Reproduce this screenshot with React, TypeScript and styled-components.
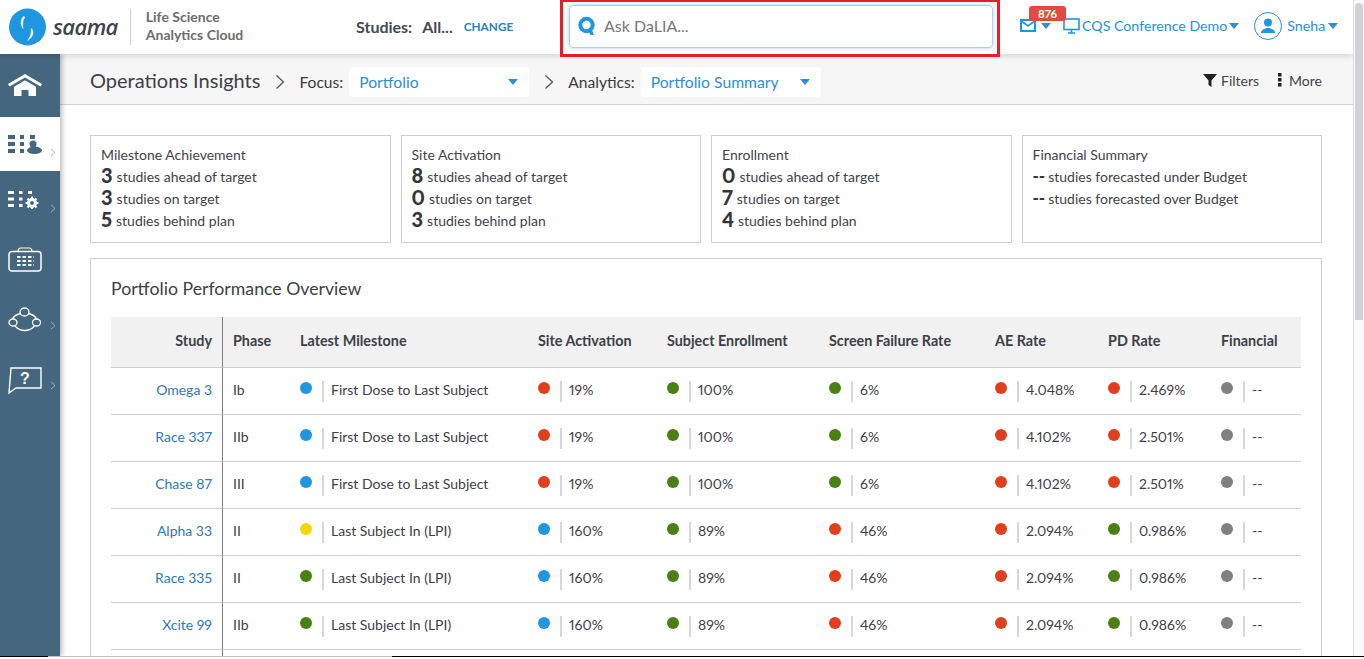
import React from "react";
import styled, { createGlobalStyle } from "styled-components";

const Global = createGlobalStyle`
  html, body { margin: 0; padding: 0; height: 100%; overflow: hidden; }
  body { font-family: Lato, "Open Sans", "Liberation Sans", sans-serif; color: #3a3f45; background: #fff; font-variant-numeric: proportional-nums; }
  * { box-sizing: border-box; }
`;

const Shell = styled.div`
  width: 1364px; height: 659px; overflow: hidden; display: grid;
  grid-template-columns: 1353px 11px; grid-template-rows: 656px 1px 2px;
`;
const Page = styled.div`display: flex; flex-direction: column; height: 656px; overflow: hidden;`;
const ScrollTrack = styled.div`background: #fafafa; border-left: 1px solid #dcdce0; padding: 3px 1px 0 1px;`;
const ScrollThumb = styled.div`height: 317px; background: #d2d3d7; border-radius: 5px 5px 0 0;`;
const BottomEdge = styled.div`
  grid-column: 1 / 3;
  background: linear-gradient(to right, #000 48px, #bdbdbd 48px, #bdbdbd 392px, #000 392px);
`;
const Header = styled.header`
  height: 54px; flex: none; display: flex; align-items: center; background: #fff; position: relative; z-index: 3;
  box-shadow: 0 2px 6px rgba(0,0,0,.14);
`;
const LogoWrap = styled.div`display: flex; align-items: center; padding-left: 9px; width: 356px; flex: none;`;
const Brand = styled.span`font-size: 22px; font-style: italic; font-weight: 600; color: #3d444b; margin: -3px 0 0 7px; letter-spacing: -0.6px; font-family: "Open Sans", sans-serif;`;
const Divider = styled.span`width: 1px; height: 36px; background: #cfcfcf; margin: 0 15px 0 12px;`;
const Tagline = styled.div`font-size: 14px; line-height: 18px; font-weight: 700; color: #6d6d6d; margin-top: -2px;`;
const Studies = styled.div`display: flex; align-items: center; width: 204px; flex: none; font-size: 16px; font-weight: 700; color: #444a50; margin-top: -2px;`;
const StudyVal = styled.span`margin-left: 10px;`;
const Change = styled.a`margin-left: 11px; font-size: 11.8px; font-weight: 700; color: #2f80b9;`;
const SearchFrame = styled.div`
  width: 440px; height: 57px; flex: none; align-self: flex-start; border-style: solid; border-color: #ea1c24; border-width: 2px 3px 3px; padding: 3px 4px 0 6px; background: #fff; position: relative;
`;
const SearchBox = styled.div`
  height: 43px; display: flex; align-items: center; gap: 9px; padding: 0 0 2px 8px; border: 1px solid #a5d3f1; border-radius: 4px;
  box-shadow: 0 0 4px rgba(90,170,230,.5); color: #777; font-size: 16px;
`;
const TopRight = styled.div`display: flex; align-items: center; margin: -3px 0 0 20px; color: #2b8fd6; font-size: 14.2px; flex: none;`;
const MailWrap = styled.span`position: relative; display: flex; align-items: center; gap: 5px; height: 20px; width: 43px;`;
const Badge = styled.span`
  position: absolute; left: 9px; top: -10px; width: 37px; height: 15px; border-radius: 3px; background: #e24c3f; color: #fff;
  font-size: 11.5px; font-weight: 700; line-height: 15px; text-align: center;
`;
const Caret = styled.span<{ $gap?: number }>`
  display: inline-block; width: 0; height: 0; margin-left: ${p => p.$gap ?? 0}px;
  border-left: 5px solid transparent; border-right: 5px solid transparent; border-top: 6px solid #2b8fd6;
`;
const MonitorIcon = styled.svg`margin-right: 2px; flex: none;`;
const Avatar = styled.span`
  width: 28px; height: 28px; border-radius: 50%; border: 1px solid #2b8fd6; display: flex; align-items: center; justify-content: center; margin: 0 5px 0 15px;
`;
const Body = styled.div`flex: 1; display: flex; min-height: 0;`;
const Rail = styled.nav`
  width: 60px; flex: none; background: #44667f; display: flex; flex-direction: column; align-items: stretch; padding-top: 4px; position: relative; z-index: 2;
  box-shadow: 2px 0 5px rgba(0,0,0,.28);
`;
const RailItem = styled.div<{ $active?: boolean }>`
  height: 54px; margin-bottom: 5px; padding: 0 0 0 8px; display: flex; align-items: center; gap: 8px; flex: none;
  background: ${p => (p.$active ? "#fff" : "transparent")};
`;
const RailIcon = styled.svg<{ $dy?: number }>`width: 34px; flex: none; margin-top: ${p => p.$dy ?? 0}px;`;
const Chevron = styled.svg<{ $dy: number }>`width: 6px; height: 9px; margin-top: ${p => p.$dy}px;`;
const Main = styled.main`flex: 1; min-width: 0; display: flex; flex-direction: column; background: #fff;`;
const Crumb = styled.div`
  height: 51px; flex: none; display: flex; align-items: center; padding: 6px 31px 0 30px; background: #f6f6f6; border-bottom: 1px solid #d3d3d3; font-size: 15.6px; color: #3a3a3a;
`;
const CrumbTitle = styled.span`font-size: 20px; color: #3c4045; margin-top: -4px;`;
const Sep = styled.svg`width: 10px; height: 16px; margin: 0 14px 0 15px; flex: none;`;
const Select = styled.div`
  width: 180px; height: 30px; background: #fff; border-radius: 4px; margin-left: 6px; padding: 0 11px 0 10px; display: flex; align-items: center; justify-content: space-between;
  color: #2b8fd6; font-size: 15.7px;
`;
const Actions = styled.div`margin: -4px 0 0 auto; display: flex; align-items: center; gap: 19px; font-size: 14px; color: #444;`;
const Action = styled.span<{ $gap: number }>`display: flex; align-items: center; gap: ${p => p.$gap}px;`;
const Content = styled.div`flex: 1; padding: 30px 31px 0 30px; min-height: 0; overflow: hidden;`;
const Cards = styled.div`display: grid; grid-template-columns: repeat(4, 1fr); column-gap: 10px;`;
const Card = styled.section`
  height: 108px; border: 1px solid #cfcfcf; padding: 8px 10px; font-size: 14px; line-height: 22px; color: #3f4347;
`;
const Num = styled.b`font-size: 20px; line-height: 0; font-weight: 900; color: #33373b; margin-right: 4px; vertical-align: -1px;`;
const Dash = styled.b`font-size: 17px; line-height: 0; font-weight: 900; color: #33373b; margin-right: 3px;`;
const Line = styled.div`height: 22px; white-space: nowrap;`;
const Panel = styled.section`
  margin-top: 15px; border: 1px solid #cfcfcf; border-bottom: 0; padding: 0 20px; height: 400px;
`;
const PanelTitle = styled.h2`margin: 0; height: 58px; padding-top: 18px; font-size: 17.7px; line-height: 24px; font-weight: 400; color: #3c4045;`;
const Table = styled.div`display: grid; grid-template-columns: 112px 77px 238px 129px 162px 166px 113px 113px 80px;`;
const Row = styled.div<{ $head?: boolean }>`
  display: contents;
  & > div {
    height: ${p => (p.$head ? "51px" : "47px")}; border-bottom: 1px solid #cdcdcd;
    background: ${p => (p.$head ? "#f1f1f1" : "#fff")}; font-weight: ${p => (p.$head ? 700 : 400)};
    font-size: ${p => (p.$head ? "14.35px" : "14px")};
  }
`;
const Cell = styled.div<{ $study?: boolean }>`
  display: flex; align-items: center; color: #3c4045; white-space: nowrap; padding-bottom: 4px;
  ${p => (p.$study ? "justify-content: flex-end; padding-right: 10px; border-right: 1px solid #808080;" : "")}
`;
const PhaseCell = styled(Cell)`padding-left: 10px;`;
const Link = styled.a`color: #2f78b7;`;
const Dot = styled.span<{ $c: string }>`width: 12px; height: 12px; border-radius: 50%; background: ${p => p.$c}; margin-top: -3px; flex: none;`;
const Bar = styled.span`width: 2px; height: 21px; background: #d6d6dc; margin: 4px 7px 0 10px; flex: none;`;

const C = { b: "#1f96e0", r: "#e03e1c", g: "#4a7f14", y: "#f8d40d", k: "#808080" };

type R = [string, string, string, string, string, string, string, string, string, string, string, string];
const rows: R[] = [
  ["Omega 3", "Ib", C.b, "First Dose to Last Subject", C.r, "19%", C.g, "100%", C.g, "6%", C.r, "4.048%"],
  ["Race 337", "IIb", C.b, "First Dose to Last Subject", C.r, "19%", C.g, "100%", C.g, "6%", C.r, "4.102%"],
  ["Chase 87", "III", C.b, "First Dose to Last Subject", C.r, "19%", C.g, "100%", C.g, "6%", C.r, "4.102%"],
  ["Alpha 33", "II", C.y, "Last Subject In (LPI)", C.b, "160%", C.g, "89%", C.r, "46%", C.r, "2.094%"],
  ["Race 335", "II", C.g, "Last Subject In (LPI)", C.b, "160%", C.g, "89%", C.r, "46%", C.r, "2.094%"],
  ["Xcite 99", "IIb", C.g, "Last Subject In (LPI)", C.b, "160%", C.g, "89%", C.r, "46%", C.r, "2.094%"],
];
const pd = ["2.469%", "2.501%", "2.501%", "0.986%", "0.986%", "0.986%"];

const cards = [
  { t: "Milestone Achievement", l: [["3", "studies ahead of target"], ["3", "studies on target"], ["5", "studies behind plan"]] },
  { t: "Site Activation", l: [["8", "studies ahead of target"], ["0", "studies on target"], ["3", "studies behind plan"]] },
  { t: "Enrollment", l: [["0", "studies ahead of target"], ["7", "studies on target"], ["4", "studies behind plan"]] },
  { t: "Financial Summary", l: [["--", "studies forecasted under Budget"], ["--", "studies forecasted over Budget"]] },
];

const Chev = ({ dy }: { dy: number }) => (
  <Chevron $dy={dy} viewBox="0 0 6 9"><path d="M1 .8 5 4.5 1 8.2" fill="none" stroke="#9fb2c1" strokeWidth="1" /></Chevron>
);
const SepIcon = () => <Sep viewBox="0 0 10 16"><path d="M1.500 1.500 8.500 8 1.500 14.500" fill="none" stroke="#555" strokeWidth="1.300" /></Sep>;

const App = () => (
  <Shell>
    <Global />
    <Page>
      <Header>
        <LogoWrap>
          <svg width="37" height="38" viewBox="0 0 37 38">
            <circle cx="18.500" cy="19" r="18.500" fill="#1f96e0" />
            <path d="M14.500 8.500c-2.500 3-3.500 7-.5 12 -.8-4-.5-8 1.800-11.500z" fill="#fff" stroke="#fff" strokeWidth=".6" />
            <path d="M22.500 20.500c2.500 3.500 2 8-3.800 12 2.700-3.500 4-7.500 3.800-12z" fill="#fff" stroke="#fff" strokeWidth=".6" />
          </svg>
          <Brand>saama</Brand>
          <Divider />
          <Tagline>Life Science<br />Analytics Cloud</Tagline>
        </LogoWrap>
        <Studies>Studies:<StudyVal>All...</StudyVal><Change>CHANGE</Change></Studies>
        <SearchFrame>
          <SearchBox>
            <svg width="17" height="20" viewBox="0 0 17 20"><circle cx="8.500" cy="9" r="6.200" fill="none" stroke="#1f96e0" strokeWidth="4" /><path d="M9.500 13l3 6h3.500l-3-7z" fill="#1f96e0" /></svg>
            Ask DaLIA...
          </SearchBox>
        </SearchFrame>
        <TopRight>
          <MailWrap>
            <Badge>876</Badge>
            <svg width="16" height="13" viewBox="0 0 16 13"><rect x="1" y="1" width="14" height="11" fill="none" stroke="#1f96e0" strokeWidth="2" /><path d="M2 2.500 8 7l6-4.500" fill="none" stroke="#1f96e0" strokeWidth="1.600" /></svg>
            <Caret />
          </MailWrap>
          <MonitorIcon width="17" height="16" viewBox="0 0 17 16"><rect x="1" y="1" width="15" height="10.500" fill="none" stroke="#1f96e0" strokeWidth="1.600" /><path d="M5 15h7M8.500 12v3" stroke="#1f96e0" strokeWidth="1.600" /></MonitorIcon>
          CQS Conference Demo<Caret $gap={2} />
          <Avatar>
            <svg width="16" height="18" viewBox="0 0 16 18"><circle cx="8" cy="5.500" r="4" fill="#1f96e0" /><path d="M1 16c0-3.500 4-4 5.500-5h3C11 12 15 12.500 15 16z" fill="#1f96e0" /></svg>
          </Avatar>
          Sneha<Caret $gap={3} />
        </TopRight>
      </Header>
      <Body>
        <Rail>
          <RailItem>
            <RailIcon height="23" viewBox="0 0 34 23" fill="#fff"><path d="M17 0 0 10l1.500 2.500L17 3.500 32.500 12.500 34 10z" /><path d="M6 12.800 17 6.200l11 6.600V22h-7.500v-6h-7v6H6z" /></RailIcon>
          </RailItem>
          <RailItem $active>
            <RailIcon height="19" viewBox="0 0 34 19" fill="#44667f">
              <rect width="7" height="4" /><rect y="7" width="7" height="4" /><rect y="14" width="7" height="4" />
              <rect x="12" width="4" height="4" /><rect x="12" y="7" width="4" height="4" /><rect x="12" y="14" width="4" height="4" />
              <rect x="22" width="5" height="4" />
              <circle cx="25" cy="9" r="3.500" />
              <ellipse cx="26.500" cy="15.300" rx="7.500" ry="3.700" />
            </RailIcon>
            <Chev dy={16} />
          </RailItem>
          <RailItem>
            <RailIcon height="18" $dy={-6} viewBox="0 0 34 18" fill="#fff">
              <rect width="6" height="3" /><rect y="6.500" width="6" height="3" /><rect y="13" width="6" height="3" />
              <rect x="11" width="3.500" height="3" /><rect x="11" y="6.500" width="3.500" height="3" /><rect x="11" y="13" width="3.500" height="3" />
              <rect x="20" width="4" height="3" />
              <circle cx="24" cy="12" r="3.500" fill="none" stroke="#fff" strokeWidth="3" />
              <path d="M24 5.500v3M24 15.500v2.500M17.500 12h3M27.500 12h3M19.500 7.500l2 2M26.500 14.500l2 2M19.500 16.500l2-2M26.500 9.500l2-2" stroke="#fff" strokeWidth="2" />
            </RailIcon>
            <Chev dy={10} />
          </RailItem>
          <RailItem>
            <RailIcon height="25" $dy={-6} viewBox="0 0 34 25"><rect x="1" y="4.500" width="32" height="19.500" rx="3" fill="none" stroke="#fff" strokeWidth="1.500" /><path d="M10 4.500C10 2 11 1 13 1h8c2 0 3 1 3 3.500" fill="none" stroke="#fff" strokeWidth="1.200" /><path d="M9 10h17M9 14h17M9 18h17" stroke="#fff" strokeWidth="1.800" strokeDasharray="3.500 2" /></RailIcon>
          </RailItem>
          <RailItem>
            <RailIcon height="25" $dy={-4} viewBox="0 0 34 25" fill="none" stroke="#fff" strokeWidth="1.300"><ellipse cx="16.500" cy="5" rx="4.500" ry="4" /><ellipse cx="5" cy="15.500" rx="4" ry="3.500" /><ellipse cx="28.500" cy="15.500" rx="4" ry="3.500" /><path d="M12.500 6.500C8.500 7.500 5.500 9.500 4.500 12M20.500 6.500c4 1 7 3 8 5.500M7 19c5.500 6 14 6 19.500 0" /></RailIcon>
            <Chev dy={8} />
          </RailItem>
          <RailItem>
            <RailIcon height="27" viewBox="0 0 34 27" fill="none" stroke="#fff" strokeWidth="1.400"><path d="M3 1h30v20H8l-7 5z" /><text x="12" y="16.500" fill="#fff" stroke="none" fontSize="16" fontWeight="700" fontFamily="Liberation Sans">?</text></RailIcon>
            <Chev dy={10} />
          </RailItem>
        </Rail>
        <Main>
          <Crumb>
            <CrumbTitle>Operations Insights</CrumbTitle>
            <SepIcon />
            Focus:
            <Select>Portfolio<Caret /></Select>
            <SepIcon />
            Analytics:
            <Select>Portfolio Summary<Caret /></Select>
            <Actions>
              <Action $gap={4}>
                <svg width="14" height="13" viewBox="0 0 14 13"><path d="M0 0h14L8.500 6.500V13L5.500 11V6.500z" fill="#222" /></svg>
                Filters
              </Action>
              <Action $gap={7}>
                <svg width="4" height="14" viewBox="0 0 4 14" fill="#222"><rect width="3.500" height="3.500" /><rect y="5" width="3.500" height="3.500" /><rect y="10" width="3.500" height="3.500" /></svg>
                More
              </Action>
            </Actions>
          </Crumb>
          <Content>
            <Cards>
              {cards.map(c => (
                <Card key={c.t}>
                  <Line>{c.t}</Line>
                  {c.l.map((l, i) => (
                    <Line key={i}>{l[0] === "--" ? <Dash>{l[0]}</Dash> : <Num>{l[0]}</Num>}{l[1]}</Line>
                  ))}
                </Card>
              ))}
            </Cards>
            <Panel>
              <PanelTitle>Portfolio Performance Overview</PanelTitle>
              <Table>
                <Row $head>
                  <Cell $study>Study</Cell>
                  <PhaseCell>Phase</PhaseCell>
                  <Cell>Latest Milestone</Cell>
                  <Cell>Site Activation</Cell>
                  <Cell>Subject Enrollment</Cell>
                  <Cell>Screen Failure Rate</Cell>
                  <Cell>AE Rate</Cell>
                  <Cell>PD Rate</Cell>
                  <Cell>Financial</Cell>
                </Row>
                {rows.map((r, i) => (
                  <Row key={r[0]}>
                    <Cell $study><Link>{r[0]}</Link></Cell>
                    <PhaseCell>{r[1]}</PhaseCell>
                    <Cell><Dot $c={r[2]} /><Bar />{r[3]}</Cell>
                    <Cell><Dot $c={r[4]} /><Bar />{r[5]}</Cell>
                    <Cell><Dot $c={r[6]} /><Bar />{r[7]}</Cell>
                    <Cell><Dot $c={r[8]} /><Bar />{r[9]}</Cell>
                    <Cell><Dot $c={r[10]} /><Bar />{r[11]}</Cell>
                    <Cell><Dot $c={i > 2 ? C.g : C.r} /><Bar />{pd[i]}</Cell>
                    <Cell><Dot $c={C.k} /><Bar />--</Cell>
                  </Row>
                ))}
                <Row>
                  <Cell $study /><PhaseCell /><Cell /><Cell /><Cell /><Cell /><Cell /><Cell /><Cell />
                </Row>
              </Table>
            </Panel>
          </Content>
        </Main>
      </Body>
    </Page>
    <ScrollTrack><ScrollThumb /></ScrollTrack>
    <BottomEdge />
  </Shell>
);

export default App;
